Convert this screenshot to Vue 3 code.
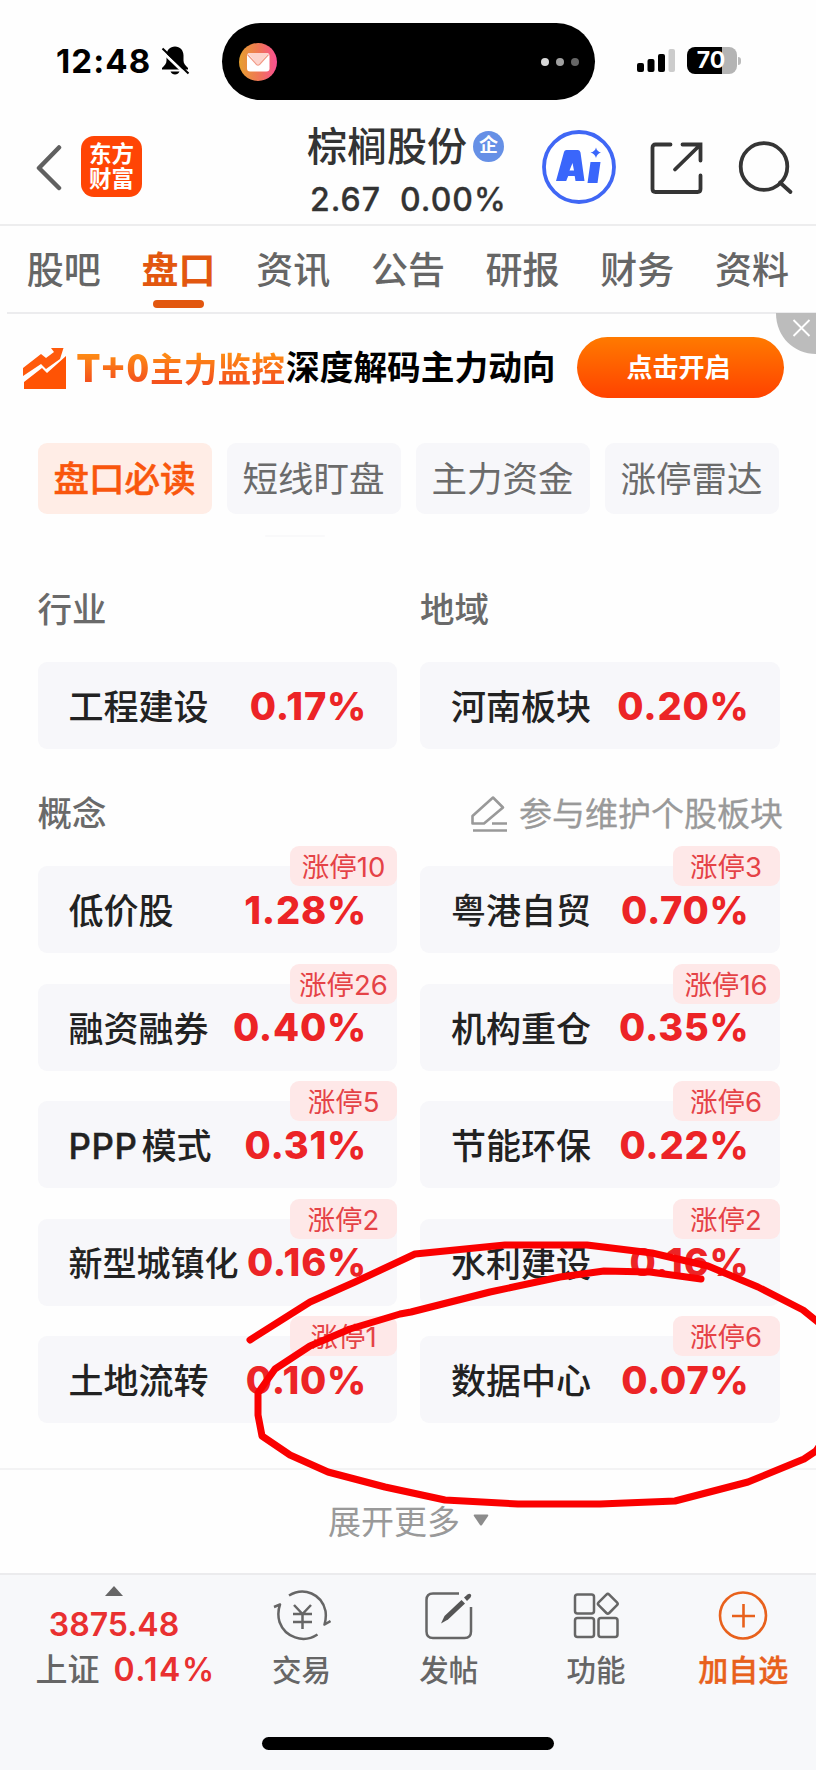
<template>
  <div class="page">
    <header class="status-bar">
      <span class="clock">12:48</span>
      <svg class="bell" width="30" height="32" viewBox="0 0 30 32">
        <path d="M15 1.500c-5 0-8.500 3.800-8.500 9v5c0 3-1.500 4.500-4.500 7.500v1.500h26V23c-3-3-4.500-4.500-4.500-7.500v-5c0-5.200-3.500-9-8.500-9z" fill="#000" />
        <path d="M10.500 26.500h9c-.8 2-2.500 3-4.500 3s-3.700-1-4.500-3z" fill="#000" />
        <path d="M1 5.500l26 25" stroke="#fff" stroke-width="3" />
        <path d="M2.500 3.500l26 25" stroke="#000" stroke-width="2" />
      </svg>
      <div class="island">
        <svg width="38" height="38" viewBox="0 0 38 38">
          <defs>
            <linearGradient id="mail" x1="0" y1="0" x2="1" y2="0">
              <stop offset="0" stop-color="#e6a02f" />
              <stop offset="0.550" stop-color="#f07458" />
              <stop offset="1" stop-color="#fa4f93" />
            </linearGradient>
          </defs>
          <circle cx="19" cy="19" r="19" fill="url(#mail)" />
          <rect x="8" y="10" width="22.500" height="18.500" rx="3" fill="#fff" />
          <path d="M9 10h20.500L20.500 20.500q-1.500 1.500-3 0z" fill="#fdd3cc" />
          <path d="M8.500 11.500l9 10q1.500 1.300 3 0l9-10" fill="none" stroke="#f29a86" stroke-width="1.200" />
        </svg>
        <div class="island-dots"><i></i><i></i><i></i></div>
      </div>
      <svg class="signal" width="39" height="25" viewBox="0 0 39 25">
        <rect x="0" y="15" width="7" height="9" rx="2" />
        <rect x="10.500" y="11" width="7" height="13" rx="2" />
        <rect x="21" y="6" width="7" height="18" rx="2" />
        <rect x="31.500" y="1" width="6.500" height="23" rx="2" fill="#ccc" />
      </svg>
      <div class="battery">70</div>
      <i class="battery-nub"></i>
    </header>

    <nav class="title-bar">
      <svg class="back" width="26" height="46" viewBox="0 0 26 46">
        <path d="M23 2.500L3 23l20 20" fill="none" stroke="#606060" stroke-width="4.500" stroke-linecap="round" stroke-linejoin="round" />
      </svg>
      <div class="logo"><span>东方</span><span>财富</span></div>
      <div class="stock">
        <div class="stock-name">棕榈股份<span class="company">企</span></div>
        <div class="stock-price"><span>2.67</span><span>0.00%</span></div>
      </div>
      <svg class="ai" width="74" height="74" viewBox="0 0 74 74">
        <circle cx="37" cy="37" r="35" fill="#fff" stroke="#4067f5" stroke-width="3.800" />
        <path fill-rule="evenodd" d="M24.500 20h11.500q2 0 2.500 2.500L42.500 51h-9l-.8-5h-6.500l-2 5H14l8-29q.5-2 2.500-2zM30.500 33l-3 7.500h4.500z" fill="#3a66fb" />
        <path d="M48.500 32h10l-3 21h-10zM54 17.500q1 4.200 5 5-4 1.200-5 5.500-1.200-4.300-5.500-5.500 4.500-.8 5.500-5z" fill="#3a66fb" />
      </svg>
      <svg class="share" width="54" height="54" viewBox="0 0 54 54" fill="none" stroke="#353535" stroke-width="3.800" stroke-linecap="round">
        <path d="M20.500 3.500H5.500q-3 0-3 3V48q0 3 3 3H47.500q3 0 3-3V34.500" />
        <path d="M32.500 3.500H50.500V19.500M50 4L25 28.500" />
      </svg>
      <svg class="search" width="56" height="56" viewBox="0 0 56 56" fill="none" stroke="#353535" stroke-width="3.800">
        <circle cx="26" cy="26.500" r="23.300" />
        <path d="M42 42.500l10.500 9.500" stroke-linecap="round" />
      </svg>
    </nav>

    <nav class="tabs">
      <a v-for="tab in tabs" :key="tab" :class="{ active: tab === '盘口' }">{{ tab }}</a>
    </nav>

    <section class="banner">
      <svg class="trend" width="44" height="43" viewBox="0 0 44 43">
        <path d="M0 21L18 7l5 4 8-6-3-4H40.500L37 12 23 22l-5-5L0 29z" fill="#ff5a0c" />
        <path d="M1 35L19 21l5 5L43 9V42H1z" fill="#ff5304" />
      </svg>
      <span class="banner-hot"><b>T</b><b>+</b><b>0</b>主力监控</span>
      <span class="banner-text">深度解码主力动向</span>
      <button class="open-btn" type="button">点击开启</button>
      <svg class="close" width="40" height="41" viewBox="0 0 40 41">
        <path d="M0 0H40V41C18 41 0 24 0 0z" fill="#bcbcbc" />
        <path d="M17.500 7l16 16M33.500 7l-16 16" stroke="#fff" stroke-width="1.800" />
      </svg>
    </section>

    <div class="pills">
      <span v-for="(pill, i) in pills" :key="pill" class="pill" :class="{ active: i === 0 }">{{ pill }}</span>
    </div>

    <main class="boards">
      <i class="scroll-hint"></i>
      <div class="heads">
        <h3>行业</h3>
        <h3>地域</h3>
      </div>
      <div class="grid">
        <div v-for="item in basics" :key="item.name" class="card">
          <span class="name">{{ item.name }}</span>
          <span class="rate">{{ item.rate }}</span>
        </div>
      </div>

      <div class="concept-head">
        <h3>概念</h3>
        <span class="maintain">
          <svg width="38" height="38" viewBox="0 0 38 38" fill="none" stroke="#999" stroke-width="2.600" stroke-linejoin="round">
            <path d="M2.500 28.500L2.500 21 23 2.500 33 12.500 14 28.500z" />
            <path d="M22 28.500H37M3 35.500H37" />
          </svg>
          参与维护个股板块
        </span>
      </div>
      <div class="grid concepts">
        <div v-for="item in concepts" :key="item.name" class="card">
          <span class="name" :class="{ tight: item.name.length > 4 }">
            <span v-if="item.latin" class="latin">{{ item.latin }}</span>{{ item.name }}
          </span>
          <span class="rate">{{ item.rate }}</span>
          <span class="limit">涨停<em>{{ item.limit }}</em></span>
        </div>
      </div>
    </main>

    <div class="more">
      展开更多
      <svg width="16" height="12" viewBox="0 0 16 12"><path d="M1.500.5h13q1.500 0 .6 1.500L9 11q-1 1-2 0L.9 2Q0 .5 1.500.5z" fill="#8c8c8c" /></svg>
    </div>

    <footer class="bottom-bar">
      <div class="index">
        <svg width="18" height="10" viewBox="0 0 18 10"><path d="M9 0l9 10H0z" fill="#666" /></svg>
        <div class="index-value">3875.48</div>
        <div class="index-change">上证<span>0.14%</span></div>
      </div>
      <div class="action">
        <svg width="58" height="52" viewBox="0 0 58 52" fill="none" stroke="#666" stroke-width="2.500">
          <path d="M16 5.500C31-3.500 49 4 52.500 21q1 7-1 13.500l6-3.500M44.500 44.500C30 54 12 47 6.500 32Q4 23 7 14.500L1 17" stroke-linejoin="round" />
          <path d="M21 15l8.500 9 8.500-9M20 24H39M20 32H39M29.500 24V39" />
        </svg>
        <span>交易</span>
      </div>
      <div class="action">
        <svg width="50" height="52" viewBox="0 0 50 52">
          <path d="M35 3.500H9Q2.500 3.500 2.500 10V41.500Q2.500 48 9 48H40.500Q47 48 47 41.500V17" fill="none" stroke="#666" stroke-width="2.500" />
          <path d="M17 33.500L20.500 26 37.500 10l3.500 3.500L24 29.500z" fill="#555" />
          <path d="M40 7.500l3.500-3q2-1.500 3.200-.2 1.200 1.500-.2 3.200L43 11z" fill="#555" />
        </svg>
        <span>发帖</span>
      </div>
      <div class="action">
        <svg width="50" height="52" viewBox="0 0 50 52" fill="none" stroke="#666" stroke-width="2.500">
          <rect x="4" y="4.500" width="19" height="19" rx="2.500" />
          <rect x="4" y="28" width="19" height="19" rx="2.500" />
          <rect x="27.500" y="28" width="19" height="19" rx="2.500" />
          <rect x="29.300" y="6.300" width="15" height="15" rx="2" transform="rotate(45 36.800 13.800)" />
        </svg>
        <span>功能</span>
      </div>
      <div class="action add">
        <svg width="50" height="52" viewBox="0 0 50 52" fill="none" stroke="#e8611c" stroke-width="2.600">
          <circle cx="25" cy="25.500" r="23" />
          <path d="M14 26H37M25.500 14V37.500" />
        </svg>
        <span>加自选</span>
      </div>
      <i class="home-indicator"></i>
    </footer>

    <!-- hand-drawn marker over the list -->
    <svg class="marker" width="816" height="1770" viewBox="0 0 816 1770">
      <polyline :points="marker" fill="none" stroke="#fa0000" stroke-width="7" stroke-linecap="round" stroke-linejoin="round" />
    </svg>
  </div>
</template>

<script setup>
const tabs = ['股吧', '盘口', '资讯', '公告', '研报', '财务', '资料']
const pills = ['盘口必读', '短线盯盘', '主力资金', '涨停雷达']

const basics = [
  { name: '工程建设', rate: '0.17%' },
  { name: '河南板块', rate: '0.20%' },
]

const concepts = [
  { name: '低价股', rate: '1.28%', limit: 10 },
  { name: '粤港自贸', rate: '0.70%', limit: 3 },
  { name: '融资融券', rate: '0.40%', limit: 26 },
  { name: '机构重仓', rate: '0.35%', limit: 16 },
  { latin: 'PPP', name: '模式', rate: '0.31%', limit: 5 },
  { name: '节能环保', rate: '0.22%', limit: 6 },
  { name: '新型城镇化', rate: '0.16%', limit: 2 },
  { name: '水利建设', rate: '0.16%', limit: 2 },
  { name: '土地流转', rate: '0.10%', limit: 1 },
  { name: '数据中心', rate: '0.07%', limit: 6 },
]

const marker = [
  '250,1340 310,1302 355,1282 415,1254 505,1245 587,1245 652,1253 708,1266',
  '758,1287 803,1310 840,1340 850,1400 816,1451 804,1459 748,1482 675,1501',
  '600,1504 518,1504 445,1500 385,1487 328,1472 290,1455 262,1436 258,1415',
  '258,1393 275,1369 310,1346 350,1329 400,1314 411,1312 490,1292 560,1277',
  '604,1271 650,1272 701,1279',
].join(' ')
</script>

<style>
body {
  margin: 0;
  background: #fefefe;
}
</style>

<style scoped>
.page {
  position: relative;
  width: 816px;
  height: 1770px;
  overflow: hidden;
  display: flex;
  flex-direction: column;
  background: #fefefe;
  font-family: Inter, 'Noto Sans CJK SC', sans-serif;
  color: #222;
}

svg {
  display: block;
  flex: none;
}

.status-bar {
  height: 113px;
  flex: none;
  display: flex;
  align-items: flex-start;
}

.clock {
  width: 104px;
  margin: 41px 0 0 56px;
  font-size: 33px;
  line-height: 40px;
  font-weight: 700;
  letter-spacing: 1.100px;
  color: #000;
}

.bell {
  margin-top: 45px;
}

.island {
  width: 373px;
  height: 77px;
  margin: 23px 0 0 32px;
  padding: 0 16px 0 17px;
  box-sizing: border-box;
  display: flex;
  align-items: center;
  justify-content: space-between;
  border-radius: 39px;
  background: #000;
}

.island-dots {
  display: flex;
  gap: 7px;
}

.island-dots i {
  width: 8px;
  height: 8px;
  border-radius: 50%;
  background: #d8d8d8;
}

.island-dots i:nth-child(2) {
  background: #a0a0a0;
}

.island-dots i:nth-child(3) {
  background: #666;
}

.signal {
  margin: 48px 0 0 42px;
}

.battery {
  width: 50px;
  height: 27px;
  margin: 47px 0 0 11px;
  border-radius: 8px;
  background: linear-gradient(90deg, #000 71%, #b4b4b4 71%);
  color: #fff;
  font-size: 23px;
  line-height: 27px;
  font-weight: 700;
  text-align: center;
  text-indent: -2px;
}

.battery-nub {
  width: 3px;
  height: 8px;
  margin: 57px 0 0 1px;
  border-radius: 0 4px 4px 0;
  background: #bbb;
}

.title-bar {
  height: 113px;
  flex: none;
  display: flex;
  align-items: flex-start;
  border-bottom: 2px solid #ededee;
  box-sizing: border-box;
}

.back {
  margin: 32px 0 0 36px;
}

.logo {
  width: 61px;
  height: 61px;
  margin: 23px 0 0 19px;
  box-sizing: border-box;
  padding-top: 5px;
  display: flex;
  flex-direction: column;
  align-items: center;
  border-radius: 13px;
  background: #ff4505;
  color: #fff;
  font-size: 22.500px;
  line-height: 25px;
  font-weight: 700;
}

.stock {
  width: 230px;
  margin: 9px 0 0 165px;
}

.stock-name {
  display: flex;
  align-items: center;
  height: 50px;
  font-size: 40px;
  line-height: 50px;
  font-weight: 500;
  color: #333;
  white-space: nowrap;
}

.company {
  width: 31px;
  height: 31px;
  margin: 0 0 2px 6px;
  border-radius: 50%;
  background: #6690e6;
  color: #fff;
  font-size: 19px;
  line-height: 30px;
  font-weight: 700;
  text-align: center;
}

.stock-price {
  display: flex;
  gap: 19px;
  padding: 8px 0 0 3px;
  font-size: 32px;
  line-height: 40px;
  font-weight: 500;
  letter-spacing: 1px;
  color: #333;
  -webkit-text-stroke: 0.3px #333;
}

.ai {
  margin: 17px 0 0 5px;
}

.share {
  margin: 28px 0 0 34px;
}

.search {
  margin: 27px 0 0 34px;
}

.tabs {
  height: 88px;
  flex: none;
  margin-left: 7px;
  box-sizing: border-box;
  display: flex;
  border-bottom: 2px solid #ececee;
}

.tabs a {
  width: 114.700px;
  flex: none;
  display: flex;
  flex-direction: column;
  align-items: center;
  font-size: 37px;
  line-height: 54px;
  font-weight: 500;
  color: #666;
  padding-top: 18px;
  box-sizing: border-box;
  position: relative;
  left: -0.500px;
}

.tabs a.active {
  color: #e2570f;
  font-weight: 700;
}

.tabs a.active::after {
  content: '';
  width: 51px;
  height: 8px;
  margin-top: 2px;
  border-radius: 4px;
  background: #e2570f;
}

.banner {
  position: relative;
  height: 129px;
  flex: none;
  display: flex;
  align-items: flex-start;
  white-space: nowrap;
}

.trend {
  margin: 33px 0 0 23px;
}

.banner-hot,
.banner-text {
  height: 50px;
  margin-top: 27px;
  font-family: 'Noto Sans CJK SC', sans-serif;
  font-size: 33.700px;
  line-height: 50px;
  font-weight: 700;
  color: #000;
}

.banner-hot {
  display: flex;
  align-items: baseline;
  width: 210px;
  margin-left: 9px;
  background: linear-gradient(#ff9214 20%, #f4521c 80%);
  background-clip: text;
  -webkit-background-clip: text;
  color: transparent;
}

.banner-hot b {
  width: 24.700px;
  text-align: center;
  font-size: 38px;
}

.open-btn {
  width: 207px;
  height: 61px;
  margin: 23px 0 0 21px;
  padding: 0 3px 0 0;
  border: none;
  border-radius: 31px;
  background: linear-gradient(#ff7a00, #ff4200);
  color: #fff;
  font-family: inherit;
  font-size: 26px;
  line-height: 60px;
  font-weight: 700;
}

.close {
  position: absolute;
  top: -1px;
  right: 0;
}

.pills {
  flex: none;
  display: grid;
  grid-template-columns: repeat(4, 174px);
  gap: 15px;
  margin-left: 37.500px;
}

.pill {
  height: 71px;
  border-radius: 9px;
  background: #f7f7fa;
  color: #6b6b6b;
  font-size: 35.500px;
  line-height: 74px;
  text-align: center;
  white-space: nowrap;
}

.pill.active {
  background: #ffede6;
  color: #f9560d;
  font-weight: 500;
  -webkit-text-stroke: 0.5px #f9560d;
}

.boards {
  height: 956px;
  flex: none;
  box-sizing: border-box;
  padding: 21px 37px 0 37.500px;
  border-bottom: 2px solid #f3f3f4;
}

.scroll-hint {
  display: block;
  width: 60px;
  height: 2px;
  margin: 0 0 46px 227px;
  border-radius: 1px;
  background: #f9f9fa;
}

h3 {
  margin: 0;
  font-size: 34.500px;
  line-height: 52px;
  font-weight: 500;
  color: #6a6a6a;
}

.heads,
.grid {
  display: grid;
  grid-template-columns: 359.500px 359.500px;
  column-gap: 23px;
}

.grid {
  margin-top: 26px;
}

.heads h3 {
  height: 52px;
  padding-top: 1px;
}

.card {
  position: relative;
  height: 87px;
  box-sizing: border-box;
  padding: 0 31px;
  display: flex;
  align-items: center;
  justify-content: space-between;
  border-radius: 9px;
  background: #f7f7fa;
  white-space: nowrap;
}

.name {
  display: flex;
  align-items: baseline;
  margin-top: -2px;
  font-size: 35px;
  font-weight: 500;
  color: #222;
}

.latin {
  margin-right: 4px;
  letter-spacing: 0.500px;
  -webkit-text-stroke: 0.4px #222;
}

.name.tight {
  font-size: 34px;
}

.rate {
  margin-right: -1px;
  font-size: 38px;
  font-weight: 800;
  letter-spacing: 0.800px;
  color: #ec2426;
}

.concept-head {
  display: flex;
  justify-content: space-between;
  margin-top: 39px;
}

.maintain {
  display: flex;
  align-items: center;
  gap: 11px;
  margin-right: -4px;
  font-size: 33px;
  line-height: 52px;
  color: #999;
  -webkit-text-stroke: 0.3px #999;
}

.concepts {
  row-gap: 30.600px;
}

.limit {
  position: absolute;
  top: -20px;
  right: 0;
  width: 107px;
  height: 40px;
  display: flex;
  justify-content: center;
  border-radius: 9px;
  background: #fee8e8;
  color: #e54246;
  font-size: 27.500px;
  line-height: 42px;
}

.limit em {
  font-style: normal;
}

.more {
  height: 103px;
  flex: none;
  box-sizing: border-box;
  padding: 0 0 4px 328px;
  display: flex;
  align-items: center;
  gap: 13px;
  font-size: 33px;
  color: #999;
}

.bottom-bar {
  position: relative;
  flex: 1;
  display: flex;
  border-top: 2px solid #ebebed;
  background: #f7f8fa;
}

.index {
  width: 228px;
  flex: none;
  display: flex;
  flex-direction: column;
  align-items: center;
  padding-top: 11px;
}

.index-value {
  margin-top: 9px;
  font-size: 32px;
  line-height: 40px;
  font-weight: 600;
  color: #e93030;
}

.index-change {
  display: flex;
  gap: 14px;
  margin: 3px 0 0 23px;
  font-size: 32px;
  line-height: 44px;
  font-weight: 500;
  color: #666;
}

.index-change span {
  color: #e93030;
  font-weight: 600;
  letter-spacing: 1.500px;
}

.action {
  width: 147.200px;
  flex: none;
  display: flex;
  flex-direction: column;
  align-items: center;
  padding-top: 15px;
  gap: 6px;
  font-size: 29.500px;
  line-height: 44px;
  font-weight: 500;
  color: #666;
}

.add {
  color: #e8611c;
}

.add span {
  font-size: 30px;
  -webkit-text-stroke: 0.4px #e8611c;
}

.home-indicator {
  position: absolute;
  left: 262px;
  bottom: 20px;
  width: 292px;
  height: 13px;
  border-radius: 7px;
  background: #000;
}

.marker {
  position: absolute;
  left: 0;
  top: 0;
  pointer-events: none;
}
</style>
